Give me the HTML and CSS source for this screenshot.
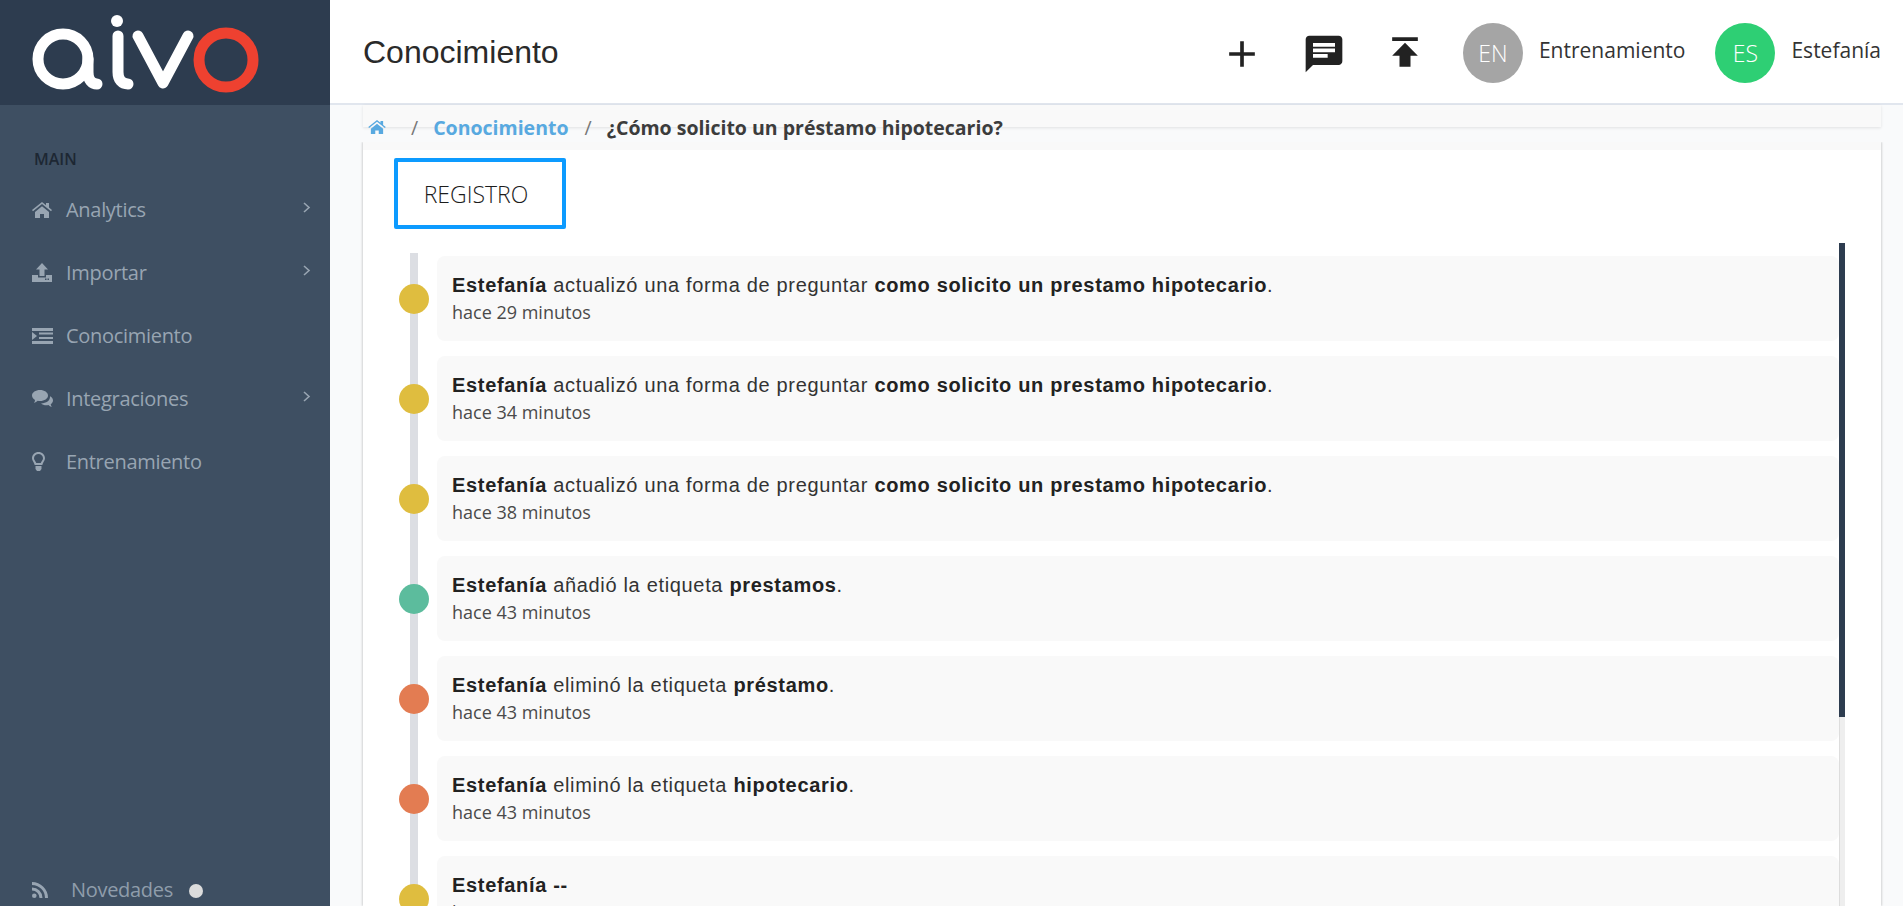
FILE: index.html
```html
<!DOCTYPE html>
<html lang="es">
<head>
  <meta charset="UTF-8">
  <title>Conocimiento</title>
  <link rel="stylesheet" href="styles.css">
</head>
<body>

<aside class="sidebar">
  <div class="logo">
    <svg width="330" height="105" viewBox="0 0 330 105" fill="none" stroke-linecap="round">
      <circle cx="63" cy="59" r="25" stroke="#fff" stroke-width="11"/>
      <path d="M88 59v13c0 8 4 12 9 12" stroke="#fff" stroke-width="11"/>
      <circle cx="117" cy="21" r="6" fill="#fff"/>
      <path d="M118 36v36c0 8 4 12 10 12" stroke="#fff" stroke-width="11"/>
      <path d="M138 36l25 47 25-47" stroke="#fff" stroke-width="11" stroke-linejoin="round"/>
      <circle cx="226" cy="60" r="27" stroke="#ee4130" stroke-width="11"/>
    </svg>
  </div>

  <div class="nav-title">MAIN</div>

  <nav class="nav">
    <a class="nav-item">
      <span class="nav-icon">
        <svg width="20" height="16" viewBox="0 0 20 16"><path d="M10 0L0 8l1 1.2L10 2l9 7.2L20 8l-3-2.4V1h-3v2.2zM3 10v6h5v-4h4v4h5v-6l-7-5.8z"/></svg>
      </span>
      <span class="nav-label">Analytics</span>
      <svg class="chevron" width="8" height="11" viewBox="0 0 8 11"><path d="M1 1l5 4.5L1 10" /></svg>
    </a>
    <a class="nav-item">
      <span class="nav-icon">
        <svg width="20" height="19" viewBox="0 0 20 19"><path d="M10 0l6 6.500h-3.500V13h-5V6.500H4zM0 12h6v2.500h8V12h6v7H0zm15.500 3.500v1.500H17v-1.500zm-2.500 0v1.500h1.500v-1.500z"/></svg>
      </span>
      <span class="nav-label">Importar</span>
      <svg class="chevron" width="8" height="11" viewBox="0 0 8 11"><path d="M1 1l5 4.5L1 10" /></svg>
    </a>
    <a class="nav-item">
      <span class="nav-icon">
        <svg width="21" height="16" viewBox="0 0 21 16"><path d="M0 0h21v3H0zM0 13h21v3H0zM7 4.500h14v2H7zM7 9h14v2H7zM0 4l5 4-5 4z"/></svg>
      </span>
      <span class="nav-label">Conocimiento</span>
    </a>
    <a class="nav-item">
      <span class="nav-icon">
        <svg width="21" height="17" viewBox="0 0 21 17"><path d="M8 0c4.400 0 8 2.400 8 5.500S12.400 11 8 11c-.8 0-1.500-.1-2.200-.2C4.700 11.800 3.400 12.500 2 13c.6-1 1-2 1-3.100C1.200 8.900 0 7.300 0 5.500 0 2.400 3.600 0 8 0z"/><path d="M18 6.300c1.900 1 3 2.500 3 4.200 0 1.500-.9 2.800-2.300 3.800.1.900.5 1.800 1.100 2.700-1.300-.4-2.500-1.100-3.400-2-.6.100-1.300.2-2 .2-2.200 0-4.100-.7-5.400-1.800 5 .1 9.400-2.700 9-7.100z"/></svg>
      </span>
      <span class="nav-label">Integraciones</span>
      <svg class="chevron" width="8" height="11" viewBox="0 0 8 11"><path d="M1 1l5 4.5L1 10" /></svg>
    </a>
    <a class="nav-item">
      <span class="nav-icon">
        <svg width="13" height="19" viewBox="0 0 13 19"><path fill-rule="evenodd" d="M6.500 0C10 0 13 2.700 13 6.200c0 2.700-2.200 4-2.700 6.800H2.700C2.200 10.200 0 8.900 0 6.200 0 2.700 3 0 6.500 0zm0 2C4.100 2 2 3.800 2 6.200c0 1.800 1.500 2.800 2.300 4.800h4.400c.8-2 2.300-3 2.300-4.800C11 3.800 8.900 2 6.500 2z"/><path d="M3.500 14h6v3l-1.500 2H5l-1.500-2z"/></svg>
      </span>
      <span class="nav-label">Entrenamiento</span>
    </a>
  </nav>

  <a class="news">
    <svg width="17" height="16" viewBox="0 0 17 16"><circle cx="2.300" cy="13.700" r="2.300"/><path d="M0 5.500v3a7.500 7.500 0 0 1 7.500 7.500h3A10.500 10.500 0 0 0 0 5.500z"/><path d="M0 0v3a13 13 0 0 1 13 13h3A16 16 0 0 0 0 0z"/></svg>
    <span class="news-label">Novedades</span>
    <span class="news-dot"></span>
  </a>
</aside>

<div class="main">
  <header class="topbar">
    <h1 class="page-title">Conocimiento</h1>
    <div class="top-actions">
      <svg class="top-icon icon-add" viewBox="0 0 24 24"><path d="M19 13h-6v6h-2v-6H5v-2h6V5h2v6h6v2z"/></svg>
      <svg class="top-icon icon-chat" viewBox="0 0 24 24"><path d="M20 2H4c-1.100 0-1.990.9-1.990 2L2 22l4-4h14c1.100 0 2-.9 2-2V4c0-1.100-.9-2-2-2zM6 9h12v2H6V9zm8 5H6v-2h8v2zm4-6H6V6h12v2z"/></svg>
      <svg class="top-icon icon-publish" viewBox="0 0 24 24"><path d="M5 4v2h14V4H5zm0 10h4v6h6v-6h4l-7-7-7 7z"/></svg>
      <div class="user">
        <span class="avatar avatar-grey">EN</span>
        <span class="user-name">Entrenamiento</span>
      </div>
      <div class="user">
        <span class="avatar avatar-green">ES</span>
        <span class="user-name">Estefanía</span>
      </div>
    </div>
  </header>

  <div class="breadcrumb">
    <svg class="crumb-home" width="18" height="14" viewBox="0 0 20 16"><path d="M10 0L0 8l1 1.200L10 2l9 7.200L20 8l-3-2.400V1h-3v2.200zM3 10v6h5v-4h4v4h5v-6l-7-5.800z"/></svg>
    <span class="crumb-sep crumb-sep-first">/</span>
    <a class="crumb-link">Conocimiento</a>
    <span class="crumb-sep">/</span>
    <span class="crumb-current">¿Cómo solicito un préstamo hipotecario?</span>
  </div>

  <section class="card">
    <div class="tabs">
      <button class="tab active">REGISTRO</button>
    </div>

    <div class="log-scroll">
      <ul class="timeline">
        <li class="log-item">
          <span class="dot dot-yellow"></span>
          <p class="log-text"><b>Estefanía</b> actualizó una forma de preguntar <b>como solicito un prestamo hipotecario</b>.</p>
          <p class="log-time">hace 29 minutos</p>
        </li>
        <li class="log-item">
          <span class="dot dot-yellow"></span>
          <p class="log-text"><b>Estefanía</b> actualizó una forma de preguntar <b>como solicito un prestamo hipotecario</b>.</p>
          <p class="log-time">hace 34 minutos</p>
        </li>
        <li class="log-item">
          <span class="dot dot-yellow"></span>
          <p class="log-text"><b>Estefanía</b> actualizó una forma de preguntar <b>como solicito un prestamo hipotecario</b>.</p>
          <p class="log-time">hace 38 minutos</p>
        </li>
        <li class="log-item">
          <span class="dot dot-green"></span>
          <p class="log-text"><b>Estefanía</b> añadió la etiqueta <b>prestamos</b>.</p>
          <p class="log-time">hace 43 minutos</p>
        </li>
        <li class="log-item">
          <span class="dot dot-orange"></span>
          <p class="log-text"><b>Estefanía</b> eliminó la etiqueta <b>préstamo</b>.</p>
          <p class="log-time">hace 43 minutos</p>
        </li>
        <li class="log-item">
          <span class="dot dot-orange"></span>
          <p class="log-text"><b>Estefanía</b> eliminó la etiqueta <b>hipotecario</b>.</p>
          <p class="log-time">hace 43 minutos</p>
        </li>
        <li class="log-item">
          <span class="dot dot-yellow"></span>
          <p class="log-text"><b>Estefanía</b> <b>--</b></p>
          <p class="log-time">hace 43 minutos</p>
        </li>
      </ul>
      <div class="scrollbar"><div class="scroll-thumb"></div></div>
    </div>
  </section>
</div>

</body>
</html>
```

FILE: styles.css
```css
html, body {
  margin: 0;
  padding: 0;
  height: 906px;
  overflow: hidden;
}

body {
  display: flex;
  font-family: "Open Sans", sans-serif;
  background-color: #f9fafb;
  color: #222;
}

/* Sidebar */
.sidebar {
  width: 330px;
  flex-shrink: 0;
  display: flex;
  flex-direction: column;
  background-color: #3e4f62;
}

.logo {
  height: 105px;
  background-color: #2d3c4f;
}

.logo svg {
  display: block;
}

.nav-title {
  margin: 44px 0 0 34px;
  font-size: 16px;
  line-height: 20px;
  font-weight: 600;
  color: #1d2733;
}

.nav {
  margin-top: 9px;
  display: flex;
  flex-direction: column;
}

.nav-item {
  height: 63px;
  padding: 0 19px 0 32px;
  display: flex;
  align-items: center;
  font-size: 20px;
  letter-spacing: -0.3px;
  color: #98a5b2;
}

.nav-icon {
  width: 34px;
  display: flex;
  align-items: center;
}

.nav-icon svg {
  fill: #98a5b2;
}

.nav-label {
  flex: 1;
}

.chevron {
  margin-top: -4px;
  fill: none;
  stroke: #98a5b2;
  stroke-width: 1.6;
}

.news {
  margin-top: auto;
  padding: 0 0 3px 32px;
  display: flex;
  align-items: center;
  font-size: 20px;
  letter-spacing: -0.3px;
  color: #8f9dab;
}

.news svg {
  fill: #98a5b2;
}

.news-label {
  margin-left: 22px;
}

.news-dot {
  width: 14px;
  height: 14px;
  margin: 3px 0 0 16px;
  border-radius: 50%;
  background-color: #dcdcdc;
}

/* Main column */
.main {
  flex: 1;
  min-width: 0;
}

.topbar {
  height: 105px;
  box-sizing: border-box;
  padding: 3px 22px 0 33px;
  display: flex;
  justify-content: space-between;
  align-items: center;
  background-color: #fff;
  border-bottom: 2px solid #e1e6ee;
}

.page-title {
  margin: 0 0 1px;
  font-family: "Liberation Sans", sans-serif;
  font-size: 32px;
  font-weight: 400;
  color: #2a2a2a;
}

.top-actions {
  display: flex;
  align-items: center;
  gap: 36px;
}

.top-icon {
  width: 44px;
  height: 44px;
  fill: #222;
}

.icon-add {
  margin: 2px 2px 0 0;
}

.icon-chat {
  margin: 2px 1px 0 0;
}

.icon-publish {
  margin-bottom: 2px;
}

.user {
  display: flex;
  align-items: center;
}

.user + .user {
  margin-left: -6px;
}

.avatar {
  width: 60px;
  height: 60px;
  border-radius: 50%;
  display: flex;
  justify-content: center;
  align-items: center;
  font-size: 23px;
  font-weight: 300;
  color: #fff;
}

.avatar-grey {
  background-color: #a5a5a5;
}

.avatar-green {
  background-color: #2ecf74;
}

.user-name {
  margin: 0 0 6px 16px;
  font-size: 21px;
  color: #333;
}

/* Breadcrumb */
.breadcrumb {
  height: 22px;
  margin: 0 22px 0 33px;
  padding-left: 5px;
  display: flex;
  align-items: center;
  background-color: #f9f9f9;
  box-shadow: 0 1px 3px rgba(0, 0, 0, 0.1);
}

.breadcrumb > * {
  position: relative;
  top: 11px;
}

.crumb-home {
  fill: #58a9e0;
}

.crumb-sep {
  margin: 0 15px 0 16px;
  font-size: 19.5px;
  color: #777;
}

.crumb-sep-first {
  margin: 0 15px 0 25px;
}

.crumb-link,
.crumb-current {
  font-size: 19.5px;
  font-weight: 700;
  white-space: nowrap;
}

.crumb-link {
  color: #58a9e0;
}

.crumb-current {
  color: #3c3c3c;
}

/* Card */
.card {
  margin: 15px 22px 0 33px;
  height: 756px;
  overflow: hidden;
  border-top: 8px solid #f9f9f9;
  background-color: #fff;
  box-shadow: -1px 0 2px rgba(0, 0, 0, 0.15), 1px 0 2px rgba(0, 0, 0, 0.15);
  clip-path: inset(0 -4px -4px -4px);
}

.tabs {
  padding: 8px 0 14px 31px;
}

.tab {
  display: block;
  width: 172px;
  height: 71px;
  padding: 0 8px 0 0;
  background-color: #fff;
  border: 4px solid #0d9bff;
  border-radius: 2px;
  font-family: "Open Sans", sans-serif;
  font-size: 23px;
  font-weight: 300;
  color: #1c1c1c;
}

.log-scroll {
  display: flex;
  justify-content: flex-end;
  margin-right: 36px;
}

.timeline {
  flex: 1;
  margin: 0;
  padding: 13px 0 0 74px;
  list-style: none;
  position: relative;
}

.timeline::before {
  content: "";
  position: absolute;
  left: 47px;
  top: 10px;
  bottom: 0;
  width: 8px;
  background-color: #dcdee3;
}

.log-item {
  height: 85px;
  margin-bottom: 15px;
  padding: 0 0 2px 15px;
  box-sizing: border-box;
  border-radius: 8px;
  background-color: #f9f9f9;
  position: relative;
  display: flex;
  flex-direction: column;
  justify-content: center;
}

.dot {
  position: absolute;
  left: -38px;
  top: 28px;
  width: 30px;
  height: 30px;
  border-radius: 50%;
}

.dot-yellow {
  background-color: #dfbd3f;
}

.dot-green {
  background-color: #5cbc9d;
}

.dot-orange {
  background-color: #e37c52;
}

.log-text {
  margin: 0;
  font-family: "Liberation Sans", sans-serif;
  font-size: 20px;
  line-height: 28px;
  letter-spacing: 0.67px;
  color: #333;
}

.log-text b {
  color: #222;
}

.log-time {
  margin: 0;
  font-size: 18px;
  line-height: 26px;
  color: #4a4a4a;
}

.scrollbar {
  width: 6px;
  flex-shrink: 0;
  background-color: #eee;
  box-shadow: inset 1px 0 0 #ddd;
}

.scroll-thumb {
  height: 474px;
  background-color: #2d3c4f;
}
```
